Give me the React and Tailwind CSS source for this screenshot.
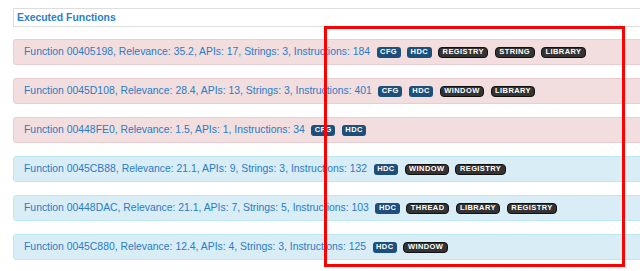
const rows = [
  { id: '00405198', rel: '35.2', apis: 17, strings: 3, ins: 184, tone: 'red', tags: ['CFG', 'HDC', 'REGISTRY', 'STRING', 'LIBRARY'] },
  { id: '0045D108', rel: '28.4', apis: 13, strings: 3, ins: 401, tone: 'red', tags: ['CFG', 'HDC', 'WINDOW', 'LIBRARY'] },
  { id: '00448FE0', rel: '1.5', apis: 1, strings: null, ins: 34, tone: 'red', tags: ['CFG', 'HDC'] },
  { id: '0045CB88', rel: '21.1', apis: 9, strings: 3, ins: 132, tone: 'blue', tags: ['HDC', 'WINDOW', 'REGISTRY'] },
  { id: '00448DAC', rel: '21.1', apis: 7, strings: 5, ins: 103, tone: 'blue', tags: ['HDC', 'THREAD', 'LIBRARY', 'REGISTRY'] },
  { id: '0045C880', rel: '12.4', apis: 4, strings: 3, ins: 125, tone: 'blue', tags: ['HDC', 'WINDOW'] },
]

function Tag({ name }) {
  const blue = name === 'CFG' || name === 'HDC'
  return (
    <span
      className={`inline-flex items-center h-[11px] px-[3.5px] text-[7.5px] font-bold tracking-[0.4px] text-white leading-none ${
        blue ? 'bg-[#1d4f7b] rounded-[3px]' : 'bg-[#333333] border border-[#111] rounded-[4px]'
      }`}
    >
      {name}
    </span>
  )
}

export default function App() {
  return (
    <div className="relative w-[640px] h-[271px] overflow-hidden bg-white" style={{ fontFamily: '"Liberation Sans", Arial, sans-serif' }}>
      {/* header */}
      <div className="mt-[8px] ml-[13px] w-[700px] h-[19px] border border-[#dddddd] flex items-center pl-[3px]">
        <span className="text-[10.4px] font-bold text-[#2a7fc9]">Executed Functions</span>
      </div>

      {/* function rows */}
      <div className="mt-[12px] ml-[13px] w-[700px] flex flex-col gap-[13px]">
        {rows.map(r => (
          <div
            key={r.id}
            className={`h-[26px] rounded-[3px] border flex items-center pl-[10px] gap-[6.5px] ${
              r.tone === 'red' ? 'bg-[#f2dede] border-[#ebccd1]' : 'bg-[#d9edf7] border-[#bce8f1]'
            }`}
          >
            <span className="text-[10.4px] text-[#2a7bc4]">
              Function {r.id}, Relevance: {r.rel}, APIs: {r.apis}
              {r.strings !== null && `, Strings: ${r.strings}`}, Instructions: {r.ins}
            </span>
            {r.tags.map(t => <Tag key={t} name={t} />)}
          </div>
        ))}
      </div>

      {/* annotation */}
      <div className="absolute left-[324px] top-[26px] w-[301px] h-[241px] border-[3px] border-[#ff0000]" />
    </div>
  )
}
